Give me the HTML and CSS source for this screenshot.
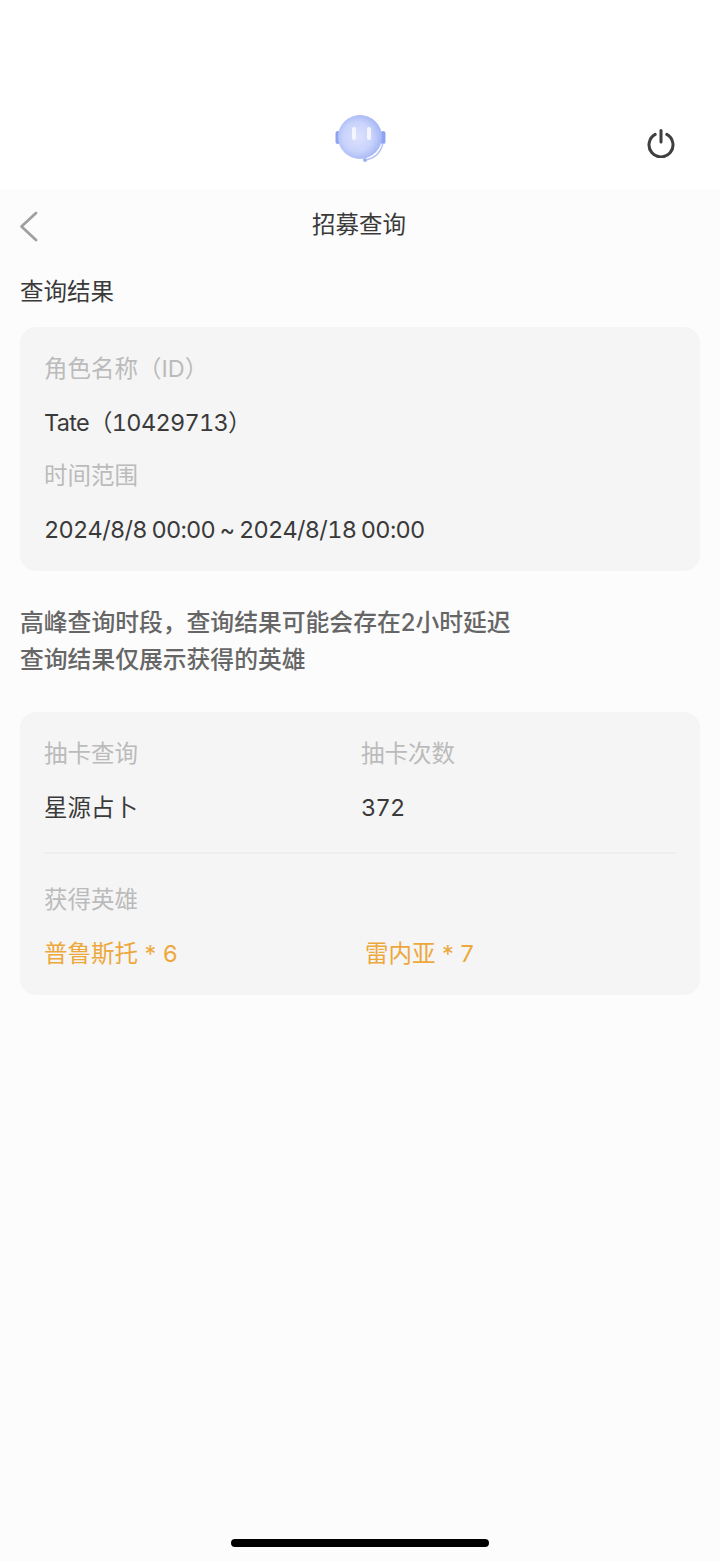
FILE: index.html
```html
<!DOCTYPE html>
<html lang="zh-CN">
<head>
    <meta charset="UTF-8">
    <meta name="viewport" content="width=device-width, initial-scale=1.0">
    <title>招募查询</title>
    <link rel="stylesheet" href="styles.css">
</head>
<body>
    <header class="top">
        <svg class="logo" width="54" height="54" viewBox="0 0 54 54">
            <defs>
                <radialGradient id="face" cx="0.45" cy="0.5" r="0.55">
                    <stop offset="0" stop-color="#dde2fc"/>
                    <stop offset="0.6" stop-color="#c9d3fb"/>
                    <stop offset="1" stop-color="#a3b5f5"/>
                </radialGradient>
            </defs>
            <rect x="1.5" y="20" width="5" height="13" rx="2.5" fill="#8ea4ef"/>
            <rect x="46.5" y="20" width="5" height="13" rx="2.5" fill="#8ea4ef"/>
            <circle cx="26" cy="26" r="22" fill="url(#face)"/>
            <rect x="18" y="16" width="4" height="13" rx="2" fill="#f4f6ff"/>
            <rect x="33" y="16" width="4" height="13" rx="2" fill="#f4f6ff"/>
            <path d="M49 32Q46 46 32 49" fill="none" stroke="#b4c1f7" stroke-width="1.4"/>
            <circle cx="31" cy="49" r="2" fill="#9fb1f4"/>
        </svg>
        <svg class="power" width="30" height="30" viewBox="0 0 30 30" fill="none" stroke="#3f3f3f" stroke-width="3" stroke-linecap="round">
            <path d="M9.2 6.4a12 12 0 1 0 11.6 0"/>
            <path d="M15 2.5v11.5"/>
        </svg>
    </header>

    <main class="page">
        <div class="nav">
            <svg class="back" width="20" height="32" viewBox="0 0 20 32" fill="none" stroke="#a0a0a0" stroke-width="2.8" stroke-linecap="round" stroke-linejoin="round">
                <path d="M18 3 3.5 16.5 18 30"/>
            </svg>
            <h1 class="nav-title">招募查询</h1>
        </div>

        <h2 class="section-title">查询结果</h2>

        <section class="card">
            <div class="label">角色名称（ID）</div>
            <div class="value num">Tate（10429713）</div>
            <div class="label">时间范围</div>
            <div class="value num date">2024/8/8 00:00 ~ 2024/8/18 00:00</div>
        </section>

        <p class="note">高峰查询时段，查询结果可能会存在2小时延迟<br>查询结果仅展示获得的英雄</p>

        <section class="card">
            <div class="cols">
                <div>
                    <div class="label">抽卡查询</div>
                    <div class="value">星源占卜</div>
                </div>
                <div>
                    <div class="label">抽卡次数</div>
                    <div class="value num">372</div>
                </div>
            </div>
            <hr class="line">
            <div class="label">获得英雄</div>
            <div class="heroes">
                <span class="hero">普鲁斯托 * 6</span>
                <span class="hero">雷内亚 * 7</span>
            </div>
        </section>

        <div class="home-bar"></div>
    </main>
</body>
</html>
```

FILE: styles.css
```css
* {
    box-sizing: border-box;
}
body {
    margin: 0;
    min-height: 1561px;
    display: flex;
    flex-direction: column;
    background: #fcfcfc;
    color: #3a3a3a;
    font-family: Inter, "Noto Sans CJK SC", sans-serif;
    font-size: 23.5px;
}
.top {
    height: 189px;
    background: #fff;
    position: relative;
}
.logo {
    position: absolute;
    left: 334px;
    top: 111px;
    filter: blur(0.5px);
}
.power {
    position: absolute;
    left: 646px;
    top: 128px;
}
.page {
    flex: 1;
    display: flex;
    flex-direction: column;
    padding: 0 20px;
}
.nav {
    height: 72px;
    padding: 0 2px 4px 0;
    display: flex;
    align-items: center;
    justify-content: center;
    position: relative;
}
.back {
    position: absolute;
    left: -2px;
    top: 21px;
}
.nav-title {
    margin: 0;
    font-size: 23.5px;
    font-weight: 400;
}
.section-title {
    margin: 0 0 17px;
    height: 49px;
    line-height: 62px;
    font-size: 23.5px;
    font-weight: 400;
}
.card {
    background: #f5f5f5;
    border-radius: 16px;
    padding: 15px 24px;
}
.label,
.value {
    line-height: 53.5px;
}
.label {
    color: #bbb;
}
.num {
    font-feature-settings: "tnum";
    letter-spacing: -0.7px;
}
.date {
    word-spacing: -1px;
}
.note {
    margin: 33px 0 34px;
    line-height: 37px;
    font-size: 23.8px;
    font-weight: 500;
    color: #666;
}
.cols {
    display: grid;
    grid-template-columns: 317px 1fr;
}
.line {
    margin: 18px 0 19px;
    border: none;
    border-top: 2px solid #eee;
}
.heroes {
    display: grid;
    grid-template-columns: 321px 1fr;
    line-height: 53.5px;
}
.hero {
    color: #eda83c;
}
.home-bar {
    width: 258px;
    height: 8px;
    margin: auto auto 14px;
    border-radius: 4px;
    background: #000;
}
```
